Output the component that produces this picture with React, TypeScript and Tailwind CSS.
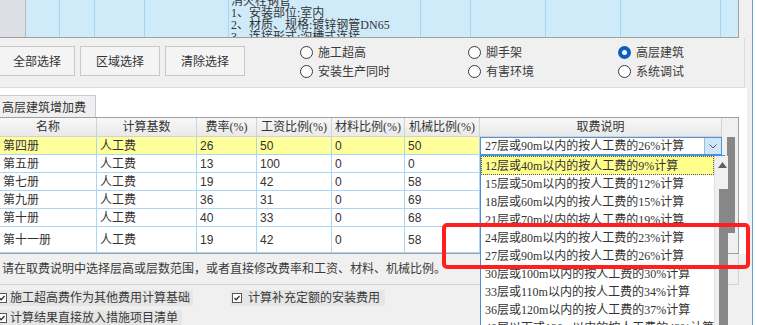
import React from 'react';

const serif = "font-['Liberation_Serif','Noto_Sans_CJK_SC',serif]";
const sans = "font-['Noto_Sans_CJK_SC',sans-serif]";
const num = "font-['Liberation_Sans','Noto_Sans_CJK_SC',sans-serif]";

const rows = [
  ['第五册', '人工费', '13', '100', '0', '0'],
  ['第七册', '人工费', '19', '42', '0', '58'],
  ['第九册', '人工费', '36', '31', '0', '69'],
  ['第十册', '人工费', '40', '33', '0', '68'],
  ['第十一册', '人工费', '19', '42', '0', '58'],
];

const options = [
  '12层或40m以内的按人工费的9%计算',
  '15层或50m以内的按人工费的12%计算',
  '18层或60m以内的按人工费的15%计算',
  '21层或70m以内的按人工费的19%计算',
  '24层或80m以内的按人工费的23%计算',
  '27层或90m以内的按人工费的26%计算',
  '30层或100m以内的按人工费的30%计算',
  '33层或110m以内的按人工费的34%计算',
  '36层或120m以内的按人工费的37%计算',
  '40层以下或130m以内的按人工费的43%计算',
];

function Radio({ label, checked }: { label: string; checked?: boolean }) {
  return (
    <div className="flex h-[19px] items-center gap-[5px]">
      {checked ? (
        <span className="flex h-[13px] w-[13px] items-center justify-center rounded-full bg-[#0a5fc0]">
          <span className="h-[5px] w-[5px] rounded-full bg-white" />
        </span>
      ) : (
        <span className="h-[13px] w-[13px] rounded-full border border-[#3a3a3a] bg-white" />
      )}
      <span className={`${serif} text-[12px] leading-none text-[#3a3a3a]`}>{label}</span>
    </div>
  );
}

function Check({ label, className }: { label: string; className: string }) {
  return (
    <div className={`flex h-[16px] shrink-0 items-center whitespace-nowrap bg-[#e6e6e6] ${className}`}>
      <span className="flex h-[10px] w-[10px] shrink-0 items-center justify-center border border-[#555] bg-white">
        <svg width="8" height="8" viewBox="0 0 8 8">
          <polyline points="1.5,4 3.2,5.8 6.5,2" fill="none" stroke="#333" strokeWidth="1.3" />
        </svg>
      </span>
      <span className={`${serif} text-[12px] leading-none text-[#3a3a3a]`}>{label}</span>
    </div>
  );
}

function Cell({ children, font }: { children?: React.ReactNode; font: string }) {
  return (
    <div
      className={`flex items-center overflow-hidden whitespace-nowrap border-r border-b border-[#a9d7f5] px-[3px] text-[12px] text-[#333] ${font}`}
    >
      {children}
    </div>
  );
}

function Head({ children }: { children: React.ReactNode }) {
  return (
    <div
      className={`flex items-center justify-center border-r border-b border-[#d2d2d2] bg-linear-to-b from-[#f8f8f8] to-[#e9e9e9] text-[12px] text-[#333] ${serif}`}
    >
      {children}
    </div>
  );
}

export default function App() {
  return (
    <div className="relative flex h-[325px] w-[757px] overflow-hidden bg-[#f0f0f0]">
      <div className="w-[752px] shrink-0">
        {/* list above, cut off */}
        <div className="flex h-[38px] w-[739px] border-r border-b border-[#a0a0a0] bg-[#cfeaf8]">
          <div className="w-[26px] shrink-0 border-r border-[#b4b9bf] bg-[#dcdfe3]" />
          <div className="w-[34px] shrink-0 border-r border-[#a6d5f4]" />
          <div className="w-[35px] shrink-0 border-r border-[#a6d5f4]" />
          <div className="w-[50px] shrink-0 border-r border-[#a6d5f4]" />
          <div className="w-[84px] shrink-0 border-r border-[#a6d5f4]" />
          <div className="w-[192px] shrink-0 overflow-hidden border-r border-[#a6d5f4] pl-[2px]">
            <div className={`-mt-[5px] whitespace-nowrap text-[12px] leading-[12px] text-[#333] ${serif}`}>
              <div>消火栓钢管</div>
              <div>1、安装部位:室内</div>
              <div>2、材质、规格:镀锌钢管DN65</div>
              <div>3、连接形式:沟槽式连接</div>
            </div>
          </div>
          <div className="w-[50px] shrink-0 border-r border-[#a6d5f4]" />
          <div className="w-[75px] shrink-0 border-r border-[#a6d5f4]" />
          <div className="w-[75px] shrink-0 border-r border-[#a6d5f4]" />
          <div className="w-[100px] shrink-0 border-r border-[#a6d5f4]" />
          <div className="flex-1" />
        </div>

        {/* buttons + options */}
        <div className="flex h-[50px] w-[745px] items-start border-r border-b border-[#dcdcdc]">
          <div className="mt-[8px] -ml-[1px] flex gap-[5px]">
            <button className={`h-[30px] w-[76px] border border-[#c8c8c8] bg-[#f4f4f4] text-[12px] text-[#333] ${sans}`}>全部选择</button>
            <button className={`h-[30px] w-[80px] border border-[#c8c8c8] bg-[#f4f4f4] text-[12px] text-[#333] ${sans}`}>区域选择</button>
            <button className={`h-[30px] w-[80px] border border-[#c8c8c8] bg-[#f4f4f4] text-[12px] text-[#333] ${sans}`}>清除选择</button>
          </div>
          <div className="mt-[5px] ml-[55px] grid grid-cols-[168px_150px_120px]">
            <Radio label="施工超高" />
            <Radio label="脚手架" />
            <Radio label="高层建筑" checked />
            <Radio label="安装生产同时" />
            <Radio label="有害环境" />
            <Radio label="系统调试" />
          </div>
        </div>

        {/* tab page */}
        <div className="w-[747px] bg-white pt-[7px]">
          <div className={`h-[22px] w-[96px] border-t border-r border-[#c8c8c8] bg-[#f0f0f0] pl-[2px] text-[12px] leading-[21px] text-[#333] ${sans}`}>
            高层建筑增加费
          </div>
          <div className="flex w-[739px] border-t border-r border-b border-[#a0a0a0]">
            <div className="grid w-[722px] grid-cols-[97px_100px_60px_75px_73px_75px_242px] grid-rows-[19px_18px_18px_18px_18px_18px_26px]">
              <Head>名称</Head>
              <Head>计算基数</Head>
              <Head>费率(%)</Head>
              <Head>工资比例(%)</Head>
              <Head>材料比例(%)</Head>
              <Head>机械比例(%)</Head>
              <Head>取费说明</Head>

              <div className="col-span-6 grid grid-cols-[97px_100px_60px_75px_73px_75px] bg-[#ffff9c]">
                <Cell font={serif}>第四册</Cell>
                <Cell font={serif}>人工费</Cell>
                <Cell font={num}>26</Cell>
                <Cell font={num}>50</Cell>
                <Cell font={num}>0</Cell>
                <Cell font={num}>50</Cell>
              </div>
              <div className="flex border border-[#4f94d4] bg-white">
                <div className={`flex flex-1 items-center whitespace-nowrap pl-[4px] text-[12px] text-[#333] ${serif}`}>
                  27层或90m以内的按人工费的26%计算
                </div>
                <div className="flex w-[17px] items-center justify-center border-l border-[#8fbde6] bg-[#cfe5f8]">
                  <svg width="8" height="5" viewBox="0 0 8 5">
                    <polyline points="0.5,0.5 4,4 7.5,0.5" fill="none" stroke="#555" strokeWidth="1" />
                  </svg>
                </div>
              </div>

              {rows.map((r, i) => (
                <React.Fragment key={i}>
                  <Cell font={serif}>{r[0]}</Cell>
                  <Cell font={serif}>{r[1]}</Cell>
                  <Cell font={num}>{r[2]}</Cell>
                  <Cell font={num}>{r[3]}</Cell>
                  <Cell font={num}>{r[4]}</Cell>
                  <Cell font={num}>{r[5]}</Cell>
                  <Cell font={serif} />
                </React.Fragment>
              ))}
            </div>
            <div className="w-[16px] bg-[#f0f0f0] pt-[19px]">
              <div className="ml-[5px] h-[96px] w-[8px] bg-[#878787]" />
            </div>
          </div>
        </div>

        {/* hint */}
        <div className={`flex h-[31px] w-[739px] items-center border-r border-b border-[#d4d4d4] pl-[2px] text-[12px] text-[#3a3a3a] ${serif}`}>
          请在取费说明中选择层高或层数范围，或者直接修改费率和工资、材料、机械比例。
        </div>

        {/* checkboxes */}
        <div className="flex flex-col gap-[4px] pt-[5px]">
          <div className="flex">
            <Check label="施工超高费作为其他费用计算基础" className="-ml-[3px] gap-[3px] pr-[3px]" />
            <Check label="计算补充定额的安装费用" className="ml-[37px] gap-[6px] pl-[2px] pr-[5px]" />
          </div>
          <div className="flex">
            <Check label="计算结果直接放入措施项目清单" className="-ml-[3px] gap-[3px] pr-[4px]" />
          </div>
        </div>
      </div>
      <div className="flex-1 border-l border-[#6a9fd0] bg-white" />

      {/* open dropdown list */}
      <div className="absolute top-[155px] left-[480px] flex h-[180px] w-[245px] border border-[#4a8fd6] bg-white">
        <div className="flex-1">
          {options.map((o, i) => (
            <div
              key={o}
              className={
                i === 0
                  ? `flex h-[19px] items-center whitespace-nowrap border border-dotted border-[#555] bg-[#ffff8c] pl-[3px] text-[12px] text-[#333] ${serif}`
                  : `flex h-[18px] items-center whitespace-nowrap pl-[4px] text-[12px] text-[#333] ${serif}`
              }
            >
              {o}
            </div>
          ))}
        </div>
        <div className="w-[17px] border-l border-[#e0e0e0] bg-[#f0f0f0]">
          <div className="flex h-[17px] items-center justify-center pl-[1px]">
            <svg width="9" height="6" viewBox="0 0 9 6">
              <polygon points="0,6 4.5,0 9,6" fill="#606060" />
            </svg>
          </div>
          <div className="mt-[16px] ml-[4px] h-[150px] w-[9px] bg-[#878787]" />
        </div>
      </div>

      {/* red highlight */}
      <div className="absolute top-[223px] left-[442px] h-[46px] w-[308px] rounded-[5px] border-[4px] border-[#ff1f1f]" />
    </div>
  );
}
